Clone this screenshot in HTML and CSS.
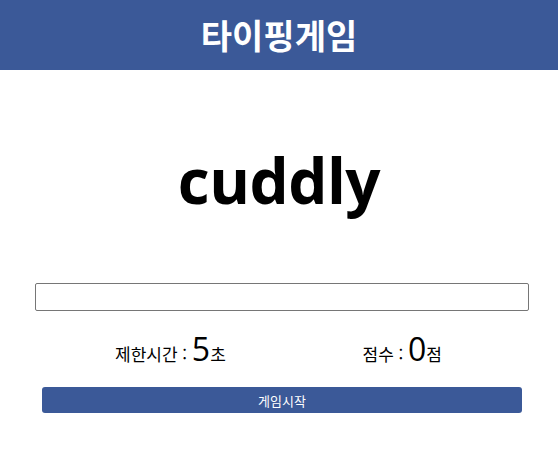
FILE: index.html
```html
<!DOCTYPE html>
<html lang="ko">
<head>
<meta charset="utf-8">
<title>타이핑게임</title>
<link rel="stylesheet" href="styles.css">
</head>
<body>
<header class="header">
  <h1 class="title">타이핑게임</h1>
</header>
<main class="game">
  <div class="word">cuddly</div>
  <input class="word-input" type="text">
  <div class="status">
    <div class="stat">제한시간 : <span class="num">5</span>초</div>
    <div class="stat">점수 : <span class="num">0</span>점</div>
  </div>
  <button class="start-btn">게임시작</button>
</main>
</body>
</html>
```
FILE: styles.css
```css
* { box-sizing: border-box; }
body {
  margin: 0;
  font-family: "Open Sans", "Noto Sans CJK KR", sans-serif;
  background: #fff;
  color: #000;
}
.header {
  height: 70px;
  background: #3b5998;
  display: flex;
  align-items: center;
  justify-content: center;
}
.title {
  margin: 0;
  color: #fff;
  font-family: "Noto Sans CJK KR", sans-serif;
  font-size: 34px;
  font-weight: 700;
  line-height: 1;
}
.game {
  display: flex;
  flex-direction: column;
}
.word {
  margin-top: 60px;
  height: 100px;
  text-align: center;
  font-size: 62px;
  font-weight: 700;
  line-height: 100px;
  letter-spacing: -0.5px;
}
.word-input {
  margin: 53px 29px 0 35px;
  height: 28px;
  border: 1px solid #767676;
  border-radius: 2px;
  font-size: 16px;
}
.status {
  margin-top: 20px;
  display: flex;
  justify-content: space-between;
  padding: 0 116px 0 115px;
  font-family: "Noto Sans CJK KR", sans-serif;
  font-size: 17px;
  height: 36px;
  align-items: baseline;
}
.stat { line-height: 36px; }
.num {
  font-family: "Open Sans", sans-serif;
  font-size: 32px;
  font-weight: 400;
}
.start-btn {
  margin: 20px 36px 0 42px;
  height: 26px;
  background: #3b5998;
  color: #fff;
  border: none;
  border-radius: 3px;
  font-family: "Noto Sans CJK KR", sans-serif;
  font-size: 13px;
  padding: 0;
}
```
